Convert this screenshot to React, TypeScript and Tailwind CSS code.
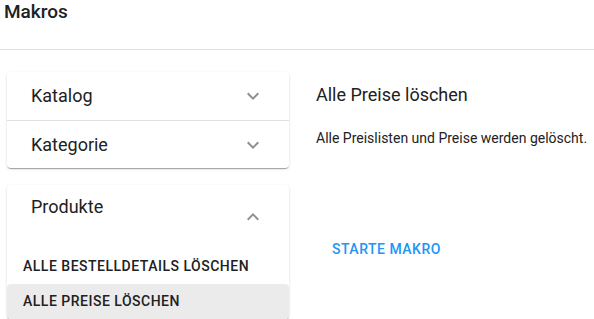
function ExpandIcon({ up = false }: { up?: boolean }) {
  return (
    <svg viewBox="0 0 24 24" className={`h-6 w-6 fill-[#8f8f8f] ${up ? 'rotate-180' : ''}`}>
      <path d="M16.59 8.59 12 13.17 7.41 8.59 6 10l6 6 6-6z" />
    </svg>
  )
}

const cardShadow =
  'shadow-[0_2px_1px_-1px_rgba(0,0,0,0.2),0_1px_1px_0_rgba(0,0,0,0.14),0_1px_3px_0_rgba(0,0,0,0.12)]'

export default function App() {
  return (
    <div className="h-[319px] w-[594px] overflow-hidden bg-white font-['Roboto',sans-serif] text-[#212121]">
      {/* Header */}
      <div className="h-[50px] border-b border-[#e0e0e0] pl-1">
        <h1 className="text-[19px] leading-6 font-medium">Makros</h1>
      </div>

      <div className="flex pt-[22px]">
        {/* Left column: accordions */}
        <div className="ml-[7px] flex w-[282px] shrink-0 flex-col gap-[17px]">
          <div className={`rounded bg-white ${cardShadow}`}>
            <div className="flex h-12 items-center justify-between px-6">
              <span className="text-[18px] leading-6">Katalog</span>
              <ExpandIcon />
            </div>
            <div className="flex h-12 items-center justify-between border-t border-[#e0e0e0] px-6">
              <span className="text-[18px] leading-6">Kategorie</span>
              <ExpandIcon />
            </div>
          </div>

          <div className={`rounded bg-white ${cardShadow}`}>
            <div className="flex h-16 justify-between px-6">
              <span className="pt-[10px] text-[18px] leading-6">Produkte</span>
              <div className="flex items-center">
                <ExpandIcon up />
              </div>
            </div>
            <div className="flex h-[35px] items-center pl-4 text-[14px] font-medium tracking-[0.5px] uppercase">
              Alle Bestelldetails löschen
            </div>
            <div className="flex h-[35px] items-center rounded bg-[#ebebeb] pl-4 text-[14px] font-medium tracking-[0.5px] uppercase">
              Alle Preise löschen
            </div>
          </div>
        </div>

        {/* Right column: details */}
        <div className="flex flex-1 flex-col items-start pl-[27px] pt-[11px]">
          <h2 className="text-[18px] leading-6">Alle Preise löschen</h2>
          <p className="mt-[21px] text-[14px] leading-5">Alle Preislisten und Preise werden gelöscht.</p>
          <button className="mt-[83px] flex h-9 items-center rounded px-4 text-[14px] font-medium tracking-[0.5px] text-[#2196f3] uppercase">
            Starte Makro
          </button>
        </div>
      </div>
    </div>
  )
}
